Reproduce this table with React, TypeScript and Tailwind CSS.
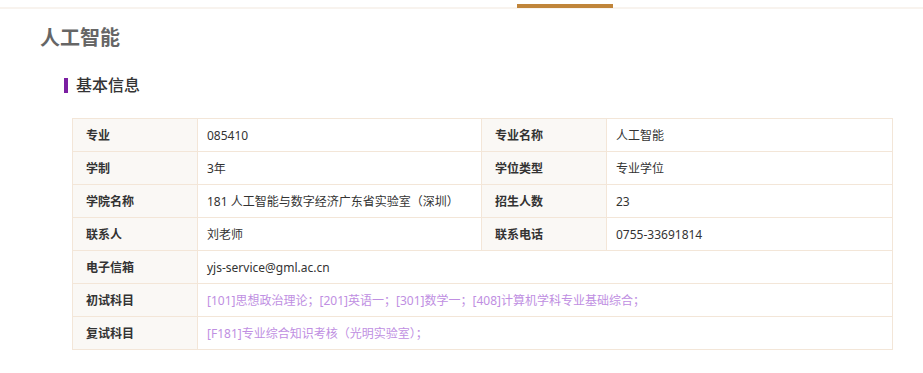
import React from "react";

type Cell = { label: string; value: string; link?: boolean };

const rows: (Cell | [Cell, Cell])[] = [
  [
    { label: "专业", value: "085410" },
    { label: "专业名称", value: "人工智能" },
  ],
  [
    { label: "学制", value: "3年" },
    { label: "学位类型", value: "专业学位" },
  ],
  [
    { label: "学院名称", value: "181 人工智能与数字经济广东省实验室（深圳）" },
    { label: "招生人数", value: "23" },
  ],
  [
    { label: "联系人", value: "刘老师" },
    { label: "联系电话", value: "0755-33691814" },
  ],
  { label: "电子信箱", value: "yjs-service@gml.ac.cn" },
  {
    label: "初试科目",
    value: "[101]思想政治理论；[201]英语一；[301]数学一；[408]计算机学科专业基础综合；",
    link: true,
  },
  { label: "复试科目", value: "[F181]专业综合知识考核（光明实验室）；", link: true },
];

const labelCls =
  "h-[33px] border border-[#f3e6d8] bg-[#faf8f5] pl-[13px] pt-[1px] text-left align-middle text-[12px] font-bold text-[#333]";
const valueCls =
  "h-[33px] border border-[#f3e6d8] bg-white pl-[9px] pt-[1px] align-middle text-[12px] text-[#333]";

const App = () => {
  return (
    <div
      className="min-h-[373px] w-[923px] bg-white"
      style={{ fontFamily: '"Noto Sans", "Noto Sans CJK SC", sans-serif' }}
    >
      {/* tab strip */}
      <div className="flex h-[9px] border-b-2 border-[#f8f3ee]">
        <div className="ml-[517px] mt-[4px] h-[4px] w-[96px] bg-[#c0853a]" />
      </div>

      <div className="px-[40px]">
        <h1 className="mt-[15px] text-[20px] leading-[28px] font-bold text-[#666]">人工智能</h1>

        <div className="ml-[24px] mt-[21px] flex items-center">
          <span className="h-[15px] w-[4px] bg-[#7b1fa2]" />
          <h2 className="ml-[8px] text-[16px] leading-[24px] font-medium text-[#333]">基本信息</h2>
        </div>

        <table className="ml-[32px] mt-[21px] w-[820px] table-fixed border-collapse">
          <colgroup>
            <col className="w-[125px]" />
            <col className="w-[284px]" />
            <col className="w-[125px]" />
            <col className="w-[286px]" />
          </colgroup>
          <tbody>
            {rows.map((row, i) =>
              Array.isArray(row) ? (
                <tr key={i}>
                  <th className={labelCls}>{row[0].label}</th>
                  <td className={valueCls}>{row[0].value}</td>
                  <th className={labelCls}>{row[1].label}</th>
                  <td className={valueCls}>{row[1].value}</td>
                </tr>
              ) : (
                <tr key={i}>
                  <th className={labelCls}>{row.label}</th>
                  <td colSpan={3} className={valueCls}>
                    {row.link ? (
                      <a href="#" className="text-[#c08fe2]">
                        {row.value}
                      </a>
                    ) : (
                      row.value
                    )}
                  </td>
                </tr>
              )
            )}
          </tbody>
        </table>
      </div>
    </div>
  );
};

export default App;
